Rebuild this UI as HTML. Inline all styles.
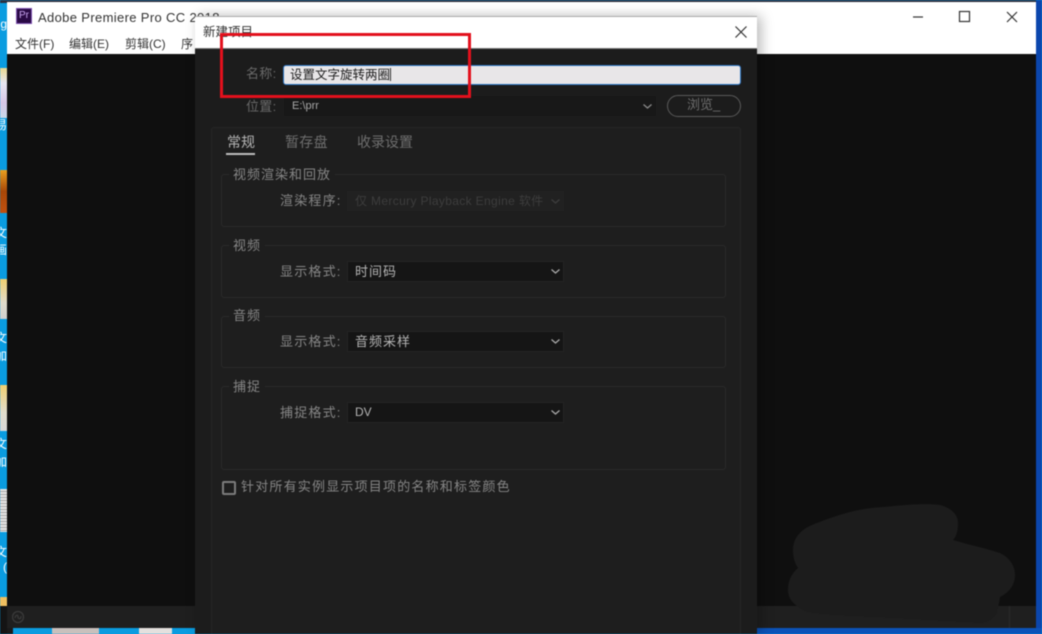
<!DOCTYPE html>
<html><head><meta charset="utf-8">
<style>
*{box-sizing:border-box;margin:0;padding:0}
html,body{width:1042px;height:634px;overflow:hidden;background:#0a9ce0}
#w{position:absolute;left:0;top:0;width:1042px;height:634px;overflow:hidden;filter:blur(.4px);font-family:"Liberation Sans","Noto Sans CJK SC",sans-serif}
.a{position:absolute;white-space:nowrap}
.l{color:#868686;font-size:13px;line-height:18px;letter-spacing:1.2px}
.sel{position:absolute;left:347px;width:217px;height:21px;background:#151515;border:1px solid #242424;color:#b4b4b4;font-size:13px;line-height:19px;padding-left:7px;letter-spacing:1px}
.grp{position:absolute;left:221px;width:505px;border:1px solid #2a2a2a;border-radius:3px}
.gl{position:absolute;left:229px;background:#1e1e1e;padding:0 4px;color:#868686;font-size:13px;line-height:18px;letter-spacing:1px}
.ch{position:absolute;left:550px;width:11px;height:7px}
.d{left:0;color:#fff;font-size:12px;width:7px;overflow:hidden;direction:rtl}
</style></head><body><div id="w">
<!-- desktop strip -->
<div class="a" style="left:0;top:0;width:1042px;height:3px;background:#2a3040"></div>
<div class="a" style="left:0;top:68px;width:7px;height:50px;background:linear-gradient(#e8d890,#e6e6f0 30%,#d8c8e8 70%,#c8d8e8)"></div>
<div class="a" style="left:0;top:170px;width:7px;height:43px;background:linear-gradient(#e8a020,#a84808 50%,#c05010)"></div>
<div class="a" style="left:0;top:279px;width:7px;height:40px;background:linear-gradient(#f0d070,#e0dccc 60%,#d0d0d0)"></div>
<div class="a" style="left:0;top:385px;width:7px;height:46px;background:linear-gradient(#f0d070,#e0dccc 60%,#d8d8d8)"></div>
<div class="a" style="left:0;top:489px;width:7px;height:43px;background:repeating-linear-gradient(#e4e4e4 0 2px,#a8a8a8 2px 3px)"></div>
<div class="a" style="left:0;top:597px;width:7px;height:9px;background:#f0c060"></div>
<div class="a" style="left:0;top:606px;width:7px;height:28px;background:#141414"></div>
<div class="a d" style="top:14px;line-height:20px">g</div>
<div class="a d" style="top:116px">易</div>
<div class="a d" style="top:224px">文</div>
<div class="a d" style="top:241px">画</div>
<div class="a d" style="top:329px">文</div>
<div class="a d" style="top:347px">加</div>
<div class="a d" style="top:435px">文</div>
<div class="a d" style="top:453px">加</div>
<div class="a d" style="top:543px">文</div>
<div class="a d" style="top:560px">)</div>
<!-- right/bottom desktop -->
<div class="a" style="left:1036px;top:0;width:6px;height:634px;background:#0b46ad"></div>
<div class="a" style="left:757px;top:628px;width:285px;height:6px;background:#0b52b8"></div>
<div class="a" style="left:7px;top:628px;width:188px;height:6px;background:#0a9ce0"></div>
<div class="a" style="left:7px;top:628px;width:6px;height:6px;background:#1a1a1a"></div>
<div class="a" style="left:52px;top:628px;width:47px;height:6px;background:#c8c0bc"></div>
<div class="a" style="left:139px;top:628px;width:33px;height:6px;background:#e4e0de"></div>
<!-- main window -->
<div class="a" style="left:7px;top:2px;width:1029px;height:52px;background:#fff"></div>
<div class="a" style="left:7px;top:54px;width:1029px;height:552px;background:#0f0f0f"></div>
<div class="a" style="left:7px;top:606px;width:1029px;height:22px;background:#1f1f1f"></div>
<div class="a" style="left:1009px;top:606px;width:1px;height:22px;background:#2a2a2a"></div>
<div class="a" style="left:16px;top:8px;width:16px;height:16px;background:#2a0a45;border:1px solid #7c4fb0;color:#c9a4f0;font-size:10px;line-height:14px;text-align:center">Pr</div>
<div class="a" style="left:38px;top:9px;font-size:13px;line-height:17px;color:#333;letter-spacing:.35px">Adobe Premiere Pro CC 2018</div>
<div class="a" style="left:15px;top:36px;font-size:12px;line-height:17px;color:#333">文件(F)</div>
<div class="a" style="left:69px;top:36px;font-size:12px;line-height:17px;color:#333">编辑(E)</div>
<div class="a" style="left:125px;top:36px;font-size:12px;line-height:17px;color:#333">剪辑(C)</div>
<div class="a" style="left:181px;top:36px;font-size:12px;line-height:17px;color:#333">序</div>
<!-- window buttons -->
<svg class="a" style="left:905px;top:5px" width="125" height="24" fill="none" stroke="#333" stroke-width="1.2">
<path d="M8 12H18"/><rect x="54.500" y="6.500" width="10" height="10"/><path d="M102 7l10 10M112 7l-10 10"/>
</svg>
<svg class="a" style="left:12px;top:609px" width="16" height="16" fill="none" stroke="#3a3a3a" stroke-width="1.3"><circle cx="6" cy="8" r="5.500"/><path d="M3 9c1-4 3-3 3-1s3 3 3-1"/></svg>
<!-- blob -->
<svg class="a" style="left:0;top:0" width="1042" height="634"><path d="M793 550C793 535 805 527 817 523C840 514 860 508 883 507C905 505 925 503 940 505C952 508 958 515 958 523C958 532 956 537 953 540C970 545 985 548 1000 553C1010 558 1015 566 1015 575C1015 586 1008 593 1000 597C999 605 997 610 997 613C992 620 987 623 980 623C945 621 910 619 873 617C850 616 825 615 807 612C795 606 788 600 788 590C788 580 792 573 798 568C794 562 793 556 793 550Z" fill="#1c1c1c"/></svg>
<!-- dialog -->
<div class="a" style="left:195px;top:16px;width:562px;height:618px;box-shadow:4px 0 12px rgba(0,0,0,.28)"></div>
<div class="a" style="left:195px;top:16px;width:562px;height:33px;background:#fff;border-top:1px solid #aaa;border-bottom:1px solid #777"></div>
<div class="a" style="left:195px;top:49px;width:562px;height:585px;background:#1c1c1c"></div>
<div class="a" style="left:203px;top:24px;font-size:12.500px;line-height:17px;color:#333">新建项目</div>
<svg class="a" style="left:734px;top:25px" width="14" height="14" fill="none" stroke="#333" stroke-width="1.2"><path d="M1.500 1.500l11 11M12.500 1.500l-11 11"/></svg>
<!-- name -->
<div class="a l" style="left:246px;top:65px;color:#6a6a6a;letter-spacing:.3px">名称:</div>
<div class="a" style="left:283px;top:65px;width:458px;height:20px;background:#e8e6e8;border:1px solid #2a74c4;border-radius:3px"></div>
<div class="a" style="left:290px;top:66px;font-size:12.500px;line-height:18px;color:#1c1c1c">设置文字旋转两圈</div>
<div class="a" style="left:390px;top:68px;width:1px;height:13px;background:#333"></div>
<!-- location -->
<div class="a l" style="left:246px;top:98px;color:#6a6a6a;letter-spacing:.3px">位置:</div>
<div class="a" style="left:284px;top:96px;width:372px;height:20px;background:#181818"></div>
<div class="a" style="left:292px;top:98px;font-size:11px;line-height:16px;color:#a8a8a8">E:\prr</div>
<svg class="a ch" style="left:642px;top:103px" width="11" height="7" fill="none" stroke="#8a8a8a" stroke-width="1.300"><path d="M1.500 1.500L5.500 5L9.500 1.500"/></svg>
<div class="a" style="left:667px;top:95px;width:74px;height:22px;border:1.500px solid #5a5a5a;border-radius:11px;color:#6e6e6e;font-size:13px;line-height:18px;padding-left:19px">浏览_</div>
<!-- panel -->
<div class="a" style="left:211px;top:127px;width:530px;height:507px;background:#1e1e1e;border:1px solid #262626;border-bottom:0;border-radius:3px 3px 0 0"></div>
<div class="a" style="left:227px;top:133px;font-size:14px;line-height:18px;color:#b4b4b4">常规</div>
<div class="a" style="left:226px;top:153px;width:29px;height:2px;background:#bdbdbd"></div>
<div class="a" style="left:285px;top:133px;font-size:14px;line-height:18px;color:#6e6e6e;letter-spacing:.3px">暂存盘</div>
<div class="a" style="left:357px;top:133px;font-size:14px;line-height:18px;color:#6e6e6e;letter-spacing:.000px">收录设置</div>
<!-- groups -->
<div class="grp" style="top:174px;height:53px"></div>
<div class="gl" style="top:166px">视频渲染和回放</div>
<div class="a l" style="left:280px;top:192px">渲染程序:</div>
<div class="sel" style="top:191px;height:20px;background:#212121;border-color:#222;color:#3d3d3d;font-size:12px;line-height:18px;letter-spacing:.35px">仅 Mercury Playback Engine 软件</div>
<svg class="a ch" style="top:198px" width="11" height="7" fill="none" stroke="#3d3d3d" stroke-width="1.300"><path d="M1.500 1.500L5.500 5L9.500 1.500"/></svg>

<div class="grp" style="top:245px;height:53px"></div>
<div class="gl" style="top:237px">视频</div>
<div class="a l" style="left:280px;top:263px">显示格式:</div>
<div class="sel" style="top:261px">时间码</div>
<svg class="a ch" style="top:268px" width="11" height="7" fill="none" stroke="#a8a8a8" stroke-width="1.300"><path d="M1.500 1.500L5.500 5L9.500 1.500"/></svg>

<div class="grp" style="top:316px;height:52px"></div>
<div class="gl" style="top:307px">音频</div>
<div class="a l" style="left:280px;top:333px">显示格式:</div>
<div class="sel" style="top:331px">音频采样</div>
<svg class="a ch" style="top:338px" width="11" height="7" fill="none" stroke="#a8a8a8" stroke-width="1.300"><path d="M1.500 1.500L5.500 5L9.500 1.500"/></svg>

<div class="grp" style="top:386px;height:84px"></div>
<div class="gl" style="top:378px">捕捉</div>
<div class="a l" style="left:280px;top:404px">捕捉格式:</div>
<div class="sel" style="top:402px;font-size:12px;letter-spacing:0">DV</div>
<svg class="a ch" style="top:409px" width="11" height="7" fill="none" stroke="#a8a8a8" stroke-width="1.300"><path d="M1.500 1.500L5.500 5L9.500 1.500"/></svg>
<!-- checkbox -->
<div class="a" style="left:222px;top:481px;width:14px;height:14px;border:2px solid #7c7c7c;border-radius:2px"></div>
<div class="a l" style="left:241px;top:478px">针对所有实例显示项目项的名称和标签颜色</div>
<!-- red rect -->
<div class="a" style="left:220px;top:33px;width:251px;height:65px;border:3px solid #e3101c"></div>
</div></body></html>
